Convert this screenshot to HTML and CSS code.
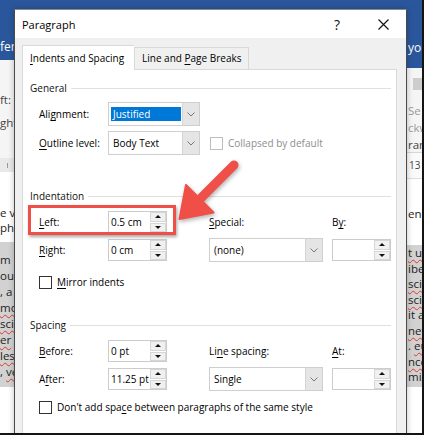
FILE: index.html
```html
<!DOCTYPE html>
<html>
<head>
<meta charset="utf-8">
<title>Paragraph</title>
<link rel="stylesheet" href="styles.css">
</head>
<body>
<div class="screen">
  <div class="doc">
    <div class="doc-left">
      <div class="blue-top left-top"><span class="tabtxt">fer</span></div>
      <div class="ribbon left-ribbon">
        <div class="rb-line">ft:</div>
        <div class="rb-line">ght</div>
      </div>
      <div class="ruler"><span class="tick"></span></div>
      <div class="page left-page">
        <div class="pline">e v</div>
        <div class="pline">ph.</div>
      </div>
      <div class="hl left-hl">
        <div class="pline">m i</div>
        <div class="pline">ous</div>
        <div class="pline">, a</div>
        <div class="pline"><span class="sq">mo</span></div>
        <div class="pline"><span class="sq">sci</span></div>
        <div class="pline"> <span class="sq">er</span></div>
        <div class="pline"><span class="sq">les</span></div>
        <div class="pline">, <span class="sq">ve</span></div>
      </div>
    </div>
    <div class="doc-mid">
      <div class="blue-top mid-top"></div>
    </div>
    <div class="doc-right">
      <div class="blue-top right-top"><span class="tabtxt">you</span></div>
      <div class="ribbon right-ribbon">
        <div class="rb-btn"></div>
        <div class="rb-line dim">Se</div>
        <div class="rb-line dim">ckw</div>
        <div class="rb-line">rang</div>
      </div>
      <div class="vruler">13 ·</div>
      <div class="page right-page">
        <div class="pline">enc</div>
      </div>
      <div class="hl right-hl">
        <div class="pline"><span class="sq">t u</span></div>
        <div class="pline">ibe</div>
        <div class="pline"><span class="sq">sci</span></div>
        <div class="pline"><span class="sq">sci</span></div>
        <div class="pline">it a</div>
        <div class="pline"><span class="sq">net</span></div>
        <div class="pline">. <span class="sq">eu</span></div>
        <div class="pline"><span class="sq">nco</span></div>
        <div class="pline">mi.</div>
      </div>
    </div>
  </div>

  <div class="dialog">
    <div class="titlebar">
      <span class="title">Paragraph</span>
      <span class="tb-btn help">?</span>
      <span class="tb-btn close">
        <svg width="11" height="11" viewBox="0 0 11 11"><path d="M0.5 0.5L10.5 10.5M10.5 0.5L0.5 10.5" stroke="#111" stroke-width="1.1" fill="none"/></svg>
      </span>
    </div>
    <div class="dbody">
      <div class="tabs">
        <div class="tab active"><u>I</u>ndents and Spacing</div>
        <div class="tab">Line and <u>P</u>age Breaks</div>
      </div>
      <div class="panel">
        <div class="group g-general">
          <div class="ghead">General</div>
          <div class="grid rows-24">
            <div class="lbl">Ali<u>g</u>nment:</div>
            <div class="select w92 span2">
              <span class="sel-val"><span class="selected">Justified</span></span>
              <span class="sel-btn"><svg width="8" height="5" viewBox="0 0 8 5"><path d="M0.5 0.5L4 4L7.5 0.5" fill="none" stroke="#777" stroke-width="1"/></svg></span>
            </div>
            <div class="lbl row2"><u>O</u>utline level:</div>
            <div class="select w92 span2">
              <span class="sel-val pad">Body Text</span>
              <span class="sel-btn"><svg width="8" height="5" viewBox="0 0 8 5"><path d="M0.5 0.5L4 4L7.5 0.5" fill="none" stroke="#777" stroke-width="1"/></svg></span>
            </div>
            <div class="check disabled span3"><span class="box"></span>Collapsed by default</div>
          </div>
        </div>

        <div class="group g-indent">
          <div class="ghead">Indentation</div>
          <div class="grid rows-22-24">
            <div class="lbl"><u>L</u>eft:</div>
            <div class="spin"><span class="spin-val">0.5 cm</span><span class="spin-btns"><span class="sb up"></span><span class="sb down"></span></span></div>
            <div class="lbl col4"><u>S</u>pecial:</div>
            <div class="lbl col6">B<u>y</u>:</div>
            <div class="lbl"><u>R</u>ight:</div>
            <div class="spin"><span class="spin-val">0 cm</span><span class="spin-btns"><span class="sb up"></span><span class="sb down"></span></span></div>
            <div class="select w114 col4">
              <span class="sel-val pad">(none)</span>
              <span class="sel-btn"><svg width="8" height="5" viewBox="0 0 8 5"><path d="M0.5 0.5L4 4L7.5 0.5" fill="none" stroke="#777" stroke-width="1"/></svg></span>
            </div>
            <div class="spin col6"><span class="spin-val"></span><span class="spin-btns"><span class="sb up"></span><span class="sb down"></span></span></div>
          </div>
          <div class="check checkrow mirror"><span class="box"></span><span><u>M</u>irror indents</span></div>
        </div>

        <div class="group g-spacing">
          <div class="ghead">Spacing</div>
          <div class="grid rows-22-24">
            <div class="lbl"><u>B</u>efore:</div>
            <div class="spin"><span class="spin-val">0 pt</span><span class="spin-btns"><span class="sb up"></span><span class="sb down"></span></span></div>
            <div class="lbl col4">Li<u>n</u>e spacing:</div>
            <div class="lbl col6"><u>A</u>t:</div>
            <div class="lbl">A<u>f</u>ter:</div>
            <div class="spin"><span class="spin-val">11.25 pt</span><span class="spin-btns"><span class="sb up"></span><span class="sb down"></span></span></div>
            <div class="select w114 col4">
              <span class="sel-val pad">Single</span>
              <span class="sel-btn"><svg width="8" height="5" viewBox="0 0 8 5"><path d="M0.5 0.5L4 4L7.5 0.5" fill="none" stroke="#777" stroke-width="1"/></svg></span>
            </div>
            <div class="spin col6"><span class="spin-val"></span><span class="spin-btns"><span class="sb up"></span><span class="sb down"></span></span></div>
          </div>
          <div class="check checkrow dontadd"><span class="box"></span><span>Don't add spa<u>c</u>e between paragraphs of the same style</span></div>
        </div>
      </div>
    </div>
  </div>

  <div class="highlight"></div>
  <svg class="arrow" width="80" height="80" viewBox="0 0 80 80">
    <line x1="64" y1="15" x2="31" y2="48" stroke="#ef4f47" stroke-width="9" stroke-linecap="round"/>
    <polygon points="9.5,69 16,35 43.5,62.5" fill="#ef4f47" stroke="#ef4f47" stroke-width="2" stroke-linejoin="round"/>
  </svg>
</div>
</body>
</html>
```

FILE: styles.css
```css
* { box-sizing: border-box; margin: 0; padding: 0; }
html, body { width: 424px; height: 435px; overflow: hidden; background: #fff; }
body { font-family: "Open Sans", "Noto Sans", sans-serif; color: #000; }

.screen {
  position: relative;
  width: 424px;
  height: 435px;
  overflow: hidden;
  border-right: 2px solid #141414;
  border-bottom: 2px solid #141414;
  background: #fff;
}

/* ---------- background document ---------- */
.doc { display: flex; height: 100%; }
.doc-left { width: 14px; display: flex; flex-direction: column; white-space: nowrap; font-size: 11.5px; }
.doc-mid { flex: 1; }
.doc-right { width: 15px; display: flex; flex-direction: column; white-space: nowrap; font-size: 11.5px; overflow: hidden; }

.blue-top { background: #2a579c; color: #fff; line-height: 16px; font-size: 12px; }
.left-top { height: 60px; padding-top: 39px; }
.mid-top { height: 60px; }
.right-top { height: 68px; padding-top: 40px; padding-left: 1px; }

.ribbon { background: #f5f5f5; color: #444; }
.left-ribbon { height: 98px; padding-top: 28px; line-height: 23px; }
.right-ribbon { height: 85px; padding-top: 10px; line-height: 17px; padding-left: 1px; border-bottom: 1px solid #d6d6d6; }
.rb-btn { width: 12px; height: 12px; margin-left: 5px; margin-bottom: 12px; background: #cdcdcd; }
.rb-line.dim { color: #9a9a9a; }

.ruler { height: 14px; background: #e9e9e9; position: relative; }
.tick { display: block; width: 1px; height: 5px; margin: 5px 0 0 7px; background: #9a9a9a; }

.vruler { height: 26px; line-height: 24px; font-size: 10px; color: #444; padding-left: 2px; background: #fafafa; border-bottom: 1px solid #dedede; }

.page { background: #fff; color: #222; line-height: 15px; }
.left-page { height: 70px; padding-top: 33px; }
.right-page { height: 66px; padding-top: 27px; }

.hl { background: #d2d2d2; color: #222; line-height: 16px; }
.left-hl { height: 145px; padding-top: 10px; }
.right-hl { height: 142px; line-height: 15.5px; }
.right-hl .pline, .right-page .pline { padding-left: 1px; }

.sq { text-decoration: underline wavy #e0372f; text-decoration-thickness: 1px; text-underline-offset: 2px; }

/* ---------- dialog ---------- */
.dialog {
  position: absolute;
  left: 14px;
  top: 9px;
  width: 393px;
  height: 440px;
  background: #f0f0f0;
  border: 1px solid #4a4a4a;
  border-top-color: #8a8a8a;
  display: flex;
  flex-direction: column;
  font-size: 10px;
  box-shadow: 0 0 6px rgba(0,0,0,0.25);
}

.titlebar {
  height: 28px;
  background: #fff;
  display: flex;
  align-items: center;
  padding-left: 7px;
}
.title { font-size: 11px; flex: 1; color: #000; }
.tb-btn { width: 46px; height: 28px; display: flex; align-items: center; justify-content: center; }
.help { font-size: 14px; color: #111; padding-top: 1px; }
.close svg { display: block; margin-top: 1px; }

.dbody { flex: 1; display: flex; flex-direction: column; padding: 7px 9px 0 7px; }

.tabs { display: flex; align-items: flex-end; position: relative; z-index: 2; }
.tab {
  height: 22px;
  line-height: 21px;
  padding-left: 7px;
  width: 115px;
  border: 1px solid #d9d9d9;
  border-bottom: none;
  background: #f0f0f0;
  white-space: nowrap;
}
.tab.active {
  width: 112px;
  height: 25px;
  line-height: 24px;
  margin-bottom: -1px;
  background: #fff;
  border-right: none;
}

.panel {
  flex: 1;
  background: #fff;
  border: 1px solid #d9d9d9;
  padding: 10px 5px 0 7px;
}

u { text-decoration: underline; text-decoration-thickness: 1px; text-underline-offset: 1.5px; }

.ghead { display: flex; align-items: center; gap: 4px; height: 16px; line-height: 16px; white-space: nowrap; color: #111; }
.ghead::after { content: ""; flex: 1; height: 1px; background: #e0e0e0; }

.g-indent { margin-top: 33px; }
.g-spacing { margin-top: 27px; }

.grid {
  display: grid;
  grid-template-columns: 69px 59px 42px 114px 9px 59px;
  row-gap: 5px;
  align-items: center;
  margin-left: 9px;
}
.g-general .grid { margin-top: 6px; }
.g-indent .grid, .g-spacing .grid { margin-top: 7px; }
.rows-24 { grid-template-rows: 24px 24px; }
.rows-22-24 { grid-template-rows: 22px 24px; }

.lbl { white-space: nowrap; line-height: 16px; }
.col4 { grid-column: 4; }
.col6 { grid-column: 6; }
.span2 { grid-column: 2 / span 2; }
.span3 { grid-column: 4 / span 3; }
.lbl.row2 { grid-column: 1; }

/* select */
.select {
  display: flex;
  height: 24px;
  border: 1px solid #cfcfcf;
  background: #fff;
}
.w92 { width: 92px; }
.w114 { width: 114px; }
.sel-val { flex: 1; display: flex; padding: 4px 1px 4px 2px; white-space: nowrap; }
.sel-val.pad { padding: 0 0 0 4px; align-items: center; line-height: 22px; }
.selected { flex: 1; background: #0078d7; color: #fff; padding-left: 2px; line-height: 14px; }
.sel-btn {
  width: 17px;
  background: #e5e5e5;
  border-left: 1px solid #d4d4d4;
  display: flex;
  align-items: center;
  justify-content: center;
}
.sel-btn svg { display: block; }

/* spinner */
.spin {
  display: flex;
  width: 59px;
  height: 22px;
  border: 1px solid #cccccc;
  background: #fff;
}
.spin-val { flex: 1; padding-left: 2px; line-height: 20px; white-space: nowrap; }
.spin-btns { width: 17px; display: flex; flex-direction: column; gap: 1px; padding: 0 0 0 1px; }
.sb {
  flex: 1;
  background: #f0f0f0;
  border: 1px solid #d6d6d6;
  display: flex;
  align-items: center;
  justify-content: center;
}
.sb.up::before { content: ""; border-left: 3px solid transparent; border-right: 3px solid transparent; border-bottom: 3px solid #111; }
.sb.down::before { content: ""; border-left: 3px solid transparent; border-right: 3px solid transparent; border-top: 3px solid #111; }

/* checkboxes */
.check { display: flex; align-items: center; gap: 5px; white-space: nowrap; line-height: 16px; }
.check .box { width: 13px; height: 13px; border: 1px solid #333; background: #fff; flex: none; }
.check.disabled { color: #8d8d8d; margin-left: 1px; gap: 5px; }
.check.disabled .box { border-color: #bdbdbd; }
.checkrow { margin-left: 9px; }
.mirror { margin-top: 12px; }
.dontadd { margin-top: 8px; }

/* ---------- annotations ---------- */
.highlight {
  position: absolute;
  left: 28px;
  top: 205px;
  width: 148px;
  height: 30px;
  border: 3.5px solid #ef4f47;
  box-shadow: 1px 2px 3px rgba(0,0,0,0.35);
}
.arrow {
  position: absolute;
  left: 170px;
  top: 150px;
  overflow: visible;
  filter: drop-shadow(1px 2px 2px rgba(0,0,0,0.3));
}
```
